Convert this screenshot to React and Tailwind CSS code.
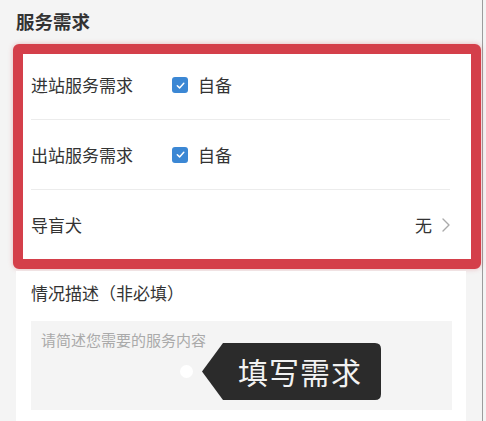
import React from 'react';

const font = { fontFamily: '"Noto Sans CJK SC", "Noto Sans", sans-serif' };

function CheckBox() {
  return (
    <span className="w-4 h-4 rounded-[3px] bg-[#3b87d4] flex items-center justify-center">
      <svg width="11" height="11" viewBox="0 0 12 12" fill="none">
        <path d="M2.5 6.2 L5 8.6 L9.6 3.6" stroke="white" strokeWidth="1.6" strokeLinecap="round" strokeLinejoin="round" />
      </svg>
    </span>
  );
}

function CheckRow({ label, h }) {
  return (
    <div className={`flex items-center ${h}`}>
      <span className="w-[141px] text-[17px] text-[#333]">{label}</span>
      <CheckBox />
      <span className="ml-[10px] text-[17px] text-[#333]">自备</span>
    </div>
  );
}

export default function App() {
  return (
    <div className="w-[486px] h-[421px] overflow-hidden bg-[#f4f4f4] relative" style={font}>
      <div className="w-[483px] h-full border-r border-[#9c9c9c] flex flex-col">
        {/* Title */}
        <div className="pt-[9px] pl-4 text-[18.5px] leading-6 font-bold text-[#333]">服务需求</div>

        {/* Highlighted card */}
        <div className="mt-[11px] ml-[13px] w-[468px] border-[10px] border-[#d43f4a] rounded-[6px] bg-white shadow-[0_0_5px_rgba(212,63,74,0.35)]">
          <div className="pl-2 pr-[21px]">
            <div className="border-b border-[#ececec]">
              <CheckRow label="进站服务需求" h="h-[65px] pb-[3px]" />
            </div>
            <div className="border-b border-[#ececec]">
              <CheckRow label="出站服务需求" h="h-[69px]" />
            </div>
            <div className="flex items-center h-[69px]">
              <span className="flex-1 text-[17px] text-[#333]">导盲犬</span>
              <span className="text-[17px] text-[#333]">无</span>
              <svg className="ml-[10px]" width="8" height="14" viewBox="0 0 8 14" fill="none">
                <path d="M1 1 L7 7 L1 13" stroke="#aaa" strokeWidth="1.4" strokeLinecap="round" strokeLinejoin="round" />
              </svg>
            </div>
          </div>
        </div>

        {/* Description */}
        <div className="ml-4 w-[450px] flex-1 bg-white mt-[2px] pl-[15px] pr-[14px]">
          <div className="pt-[10px] text-[17px] leading-6 text-[#333]">情况描述（非必填）</div>
          <div className="mt-[16px] h-[89px] bg-[#f4f4f4] pl-[10px] pt-[6px]">
            <span className="text-[15px] text-[#aaa]">请简述您需要的服务内容</span>
          </div>
        </div>
      </div>

      {/* Guide dot + tooltip */}
      <div className="absolute left-[180px] top-[365px] w-[13px] h-[13px] rounded-full bg-white" />
      <div className="absolute left-[202px] top-[343px] w-[179px] h-[57px]">
        <svg className="absolute inset-0" width="179" height="57" viewBox="0 0 179 57">
          <path d="M0 28.5 L21 0 H173 Q179 0 179 6 V51 Q179 57 173 57 H21 Z" fill="#2b2b2b" />
        </svg>
        <div className="relative h-full flex items-center pl-9 text-[30px] text-[#f2f2f2] tracking-[1px]">填写需求</div>
      </div>
    </div>
  );
}
